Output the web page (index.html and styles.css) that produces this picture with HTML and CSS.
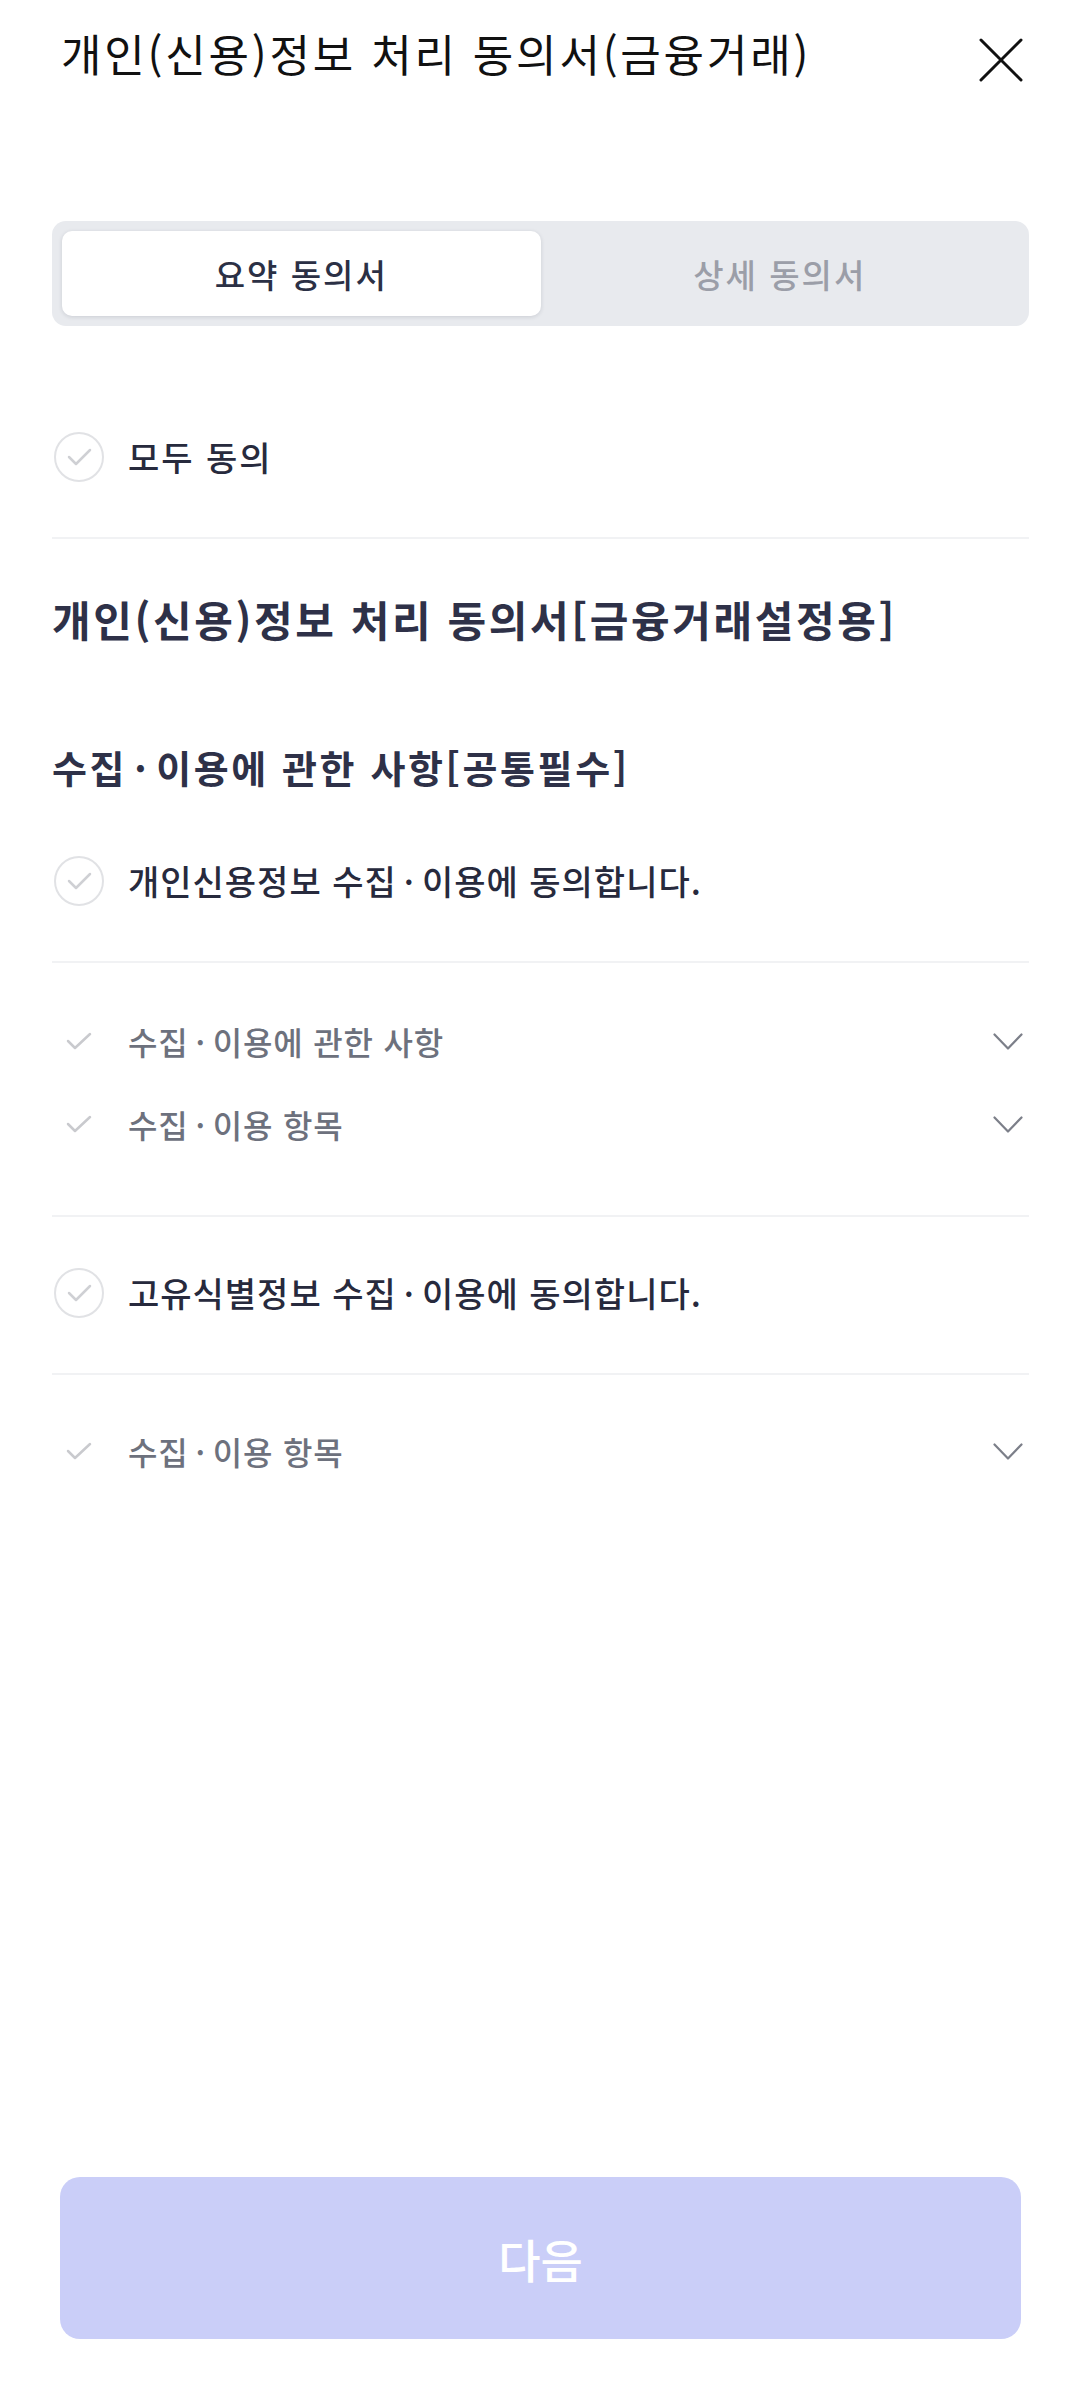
FILE: index.html
```html
<!DOCTYPE html>
<html lang="ko">
<head>
<meta charset="utf-8">
<title>개인(신용)정보 처리 동의서</title>
<link rel="stylesheet" href="styles.css">
</head>
<body>
<div class="page">
  <header class="header">
    <h1 class="title">개인(신용)정보 처리 동의서(금융거래)</h1>
    <button class="close" aria-label="닫기">
      <svg width="44" height="44" viewBox="0 0 44 44"><path d="M2 2 L42 42 M42 2 L2 42" stroke="#111" stroke-width="3" fill="none" stroke-linecap="round"/></svg>
    </button>
  </header>

  <main class="content">
    <div class="tabs">
      <div class="tab active">요약 동의서</div>
      <div class="tab">상세 동의서</div>
    </div>

    <div class="agree all">
      <span class="circle"><svg width="50" height="50" viewBox="0 0 50 50"><circle cx="25" cy="25" r="24" fill="none" stroke="#e1e2e5" stroke-width="2"/><path d="M15 25 L22 32 L36 18" fill="none" stroke="#cfd0d4" stroke-width="2.5" stroke-linecap="round" stroke-linejoin="round"/></svg></span>
      <span class="agree-text">모두 동의</span>
    </div>

    <h2 class="doc-title">개인(신용)정보 처리 동의서[금융거래설정용]</h2>
    <h3 class="section-title">수집<span class="dot">·</span>이용에 관한 사항[공통필수]</h3>

    <div class="agree first">
      <span class="circle"><svg width="50" height="50" viewBox="0 0 50 50"><circle cx="25" cy="25" r="24" fill="none" stroke="#e1e2e5" stroke-width="2"/><path d="M15 25 L22 32 L36 18" fill="none" stroke="#cfd0d4" stroke-width="2.5" stroke-linecap="round" stroke-linejoin="round"/></svg></span>
      <span class="agree-text">개인신용정보 수집<span class="dot">·</span>이용에 동의합니다.</span>
    </div>
    <ul class="details">
      <li class="detail">
        <span class="tick"><svg width="50" height="18" viewBox="0 0 50 18"><path d="M14 9 L21 16 L36 2" fill="none" stroke="#c9cace" stroke-width="2.5" stroke-linecap="round" stroke-linejoin="round"/></svg></span>
        <span class="detail-text">수집<span class="dot">·</span>이용에 관한 사항</span>
        <svg class="chev" width="30" height="17" viewBox="0 0 30 17"><path d="M1.5 1.5 L15 15.5 L28.5 1.5" fill="none" stroke="#7c7f89" stroke-width="2.2" stroke-linecap="round" stroke-linejoin="round"/></svg>
      </li>
      <li class="detail">
        <span class="tick"><svg width="50" height="18" viewBox="0 0 50 18"><path d="M14 9 L21 16 L36 2" fill="none" stroke="#c9cace" stroke-width="2.5" stroke-linecap="round" stroke-linejoin="round"/></svg></span>
        <span class="detail-text">수집<span class="dot">·</span>이용 항목</span>
        <svg class="chev" width="30" height="17" viewBox="0 0 30 17"><path d="M1.5 1.5 L15 15.5 L28.5 1.5" fill="none" stroke="#7c7f89" stroke-width="2.2" stroke-linecap="round" stroke-linejoin="round"/></svg>
      </li>
    </ul>

    <div class="agree">
      <span class="circle"><svg width="50" height="50" viewBox="0 0 50 50"><circle cx="25" cy="25" r="24" fill="none" stroke="#e1e2e5" stroke-width="2"/><path d="M15 25 L22 32 L36 18" fill="none" stroke="#cfd0d4" stroke-width="2.5" stroke-linecap="round" stroke-linejoin="round"/></svg></span>
      <span class="agree-text">고유식별정보 수집<span class="dot">·</span>이용에 동의합니다.</span>
    </div>
    <ul class="details last">
      <li class="detail">
        <span class="tick"><svg width="50" height="18" viewBox="0 0 50 18"><path d="M14 9 L21 16 L36 2" fill="none" stroke="#c9cace" stroke-width="2.5" stroke-linecap="round" stroke-linejoin="round"/></svg></span>
        <span class="detail-text">수집<span class="dot">·</span>이용 항목</span>
        <svg class="chev" width="30" height="17" viewBox="0 0 30 17"><path d="M1.5 1.5 L15 15.5 L28.5 1.5" fill="none" stroke="#7c7f89" stroke-width="2.2" stroke-linecap="round" stroke-linejoin="round"/></svg>
      </li>
    </ul>
  </main>

  <footer class="footer">
    <button class="next">다음</button>
  </footer>
</div>
</body>
</html>
```

FILE: styles.css
```css
* { box-sizing: border-box; }
html, body { margin: 0; padding: 0; background: #fff; }
body {
  font-family: "Noto Sans CJK KR", "Noto Sans", sans-serif;
  color: #272a3d;
}
.page {
  width: 1080px;
  min-height: 2385px;
  display: flex;
  flex-direction: column;
}
.header {
  height: 221px;
  display: flex;
  justify-content: space-between;
  align-items: flex-start;
  padding: 27px 57px 0 61px;
}
.title {
  margin: 0;
  font-size: 44px;
  line-height: 52px;
  font-weight: 400;
  color: #111;
  letter-spacing: 2.8px;
}
.close {
  margin-top: 11px;
  padding: 0;
  border: 0;
  background: none;
  width: 44px;
  height: 44px;
  display: flex;
}
.content {
  padding: 0 51px 0 52px;
}
.tabs {
  height: 105px;
  background: #e8eaee;
  border-radius: 14px;
  padding: 10px;
  display: grid;
  grid-template-columns: 1fr 1fr;
}
.tab {
  display: flex;
  align-items: center;
  justify-content: center;
  font-size: 33px;
  font-weight: 500;
  color: #9b9ea8;
  border-radius: 10px;
  letter-spacing: 2px;
}
.tab.active {
  background: #fff;
  color: #2b3045;
  box-shadow: 0 1px 4px rgba(30, 35, 60, 0.14);
}
.dot { margin: 0 7px; }
.agree {
  display: flex;
  align-items: center;
  gap: 24px;
  padding: 51px 0 55px 2px;
  border-bottom: 2px solid #f1f2f4;
}
.agree.all { padding-top: 106px; }
.agree.first { padding-top: 65px; }
.circle { display: flex; width: 50px; height: 50px; }
.agree-text {
  font-size: 34px;
  line-height: 50px;
  font-weight: 500;
  color: #272a3d;
  letter-spacing: 1px;
}
.all .agree-text { letter-spacing: 2px; }
.doc-title {
  margin: 54px 0 0;
  font-size: 42px;
  line-height: 52px;
  font-weight: 700;
  color: #2e3148;
  letter-spacing: 2.6px;
}
.section-title {
  margin: 98px 0 0;
  font-size: 38px;
  line-height: 48px;
  font-weight: 700;
  color: #2e3148;
  letter-spacing: 2.6px;
}
.details {
  list-style: none;
  margin: 0;
  padding: 53px 0 66px;
  display: flex;
  flex-direction: column;
  gap: 33px;
  border-bottom: 2px solid #f1f2f4;
}
.details.last { border-bottom: 0; padding-top: 51px; }
.detail {
  display: flex;
  align-items: center;
  height: 50px;
  padding-right: 6px;
}
.tick { display: flex; width: 50px; margin-left: 2px; margin-right: 24px; }
.detail-text {
  flex: 1;
  font-size: 32px;
  font-weight: 500;
  color: #6d717d;
  letter-spacing: 0.8px;
}
.chev { display: block; }
.footer {
  margin-top: auto;
  padding: 0 59px 46px 60px;
}
.next {
  width: 100%;
  height: 162px;
  border: 0;
  border-radius: 20px;
  background: #cacef8;
  color: #fff;
  font-family: "Noto Sans CJK KR", "Noto Sans", sans-serif;
  font-size: 46px;
  font-weight: 500;
}
```
